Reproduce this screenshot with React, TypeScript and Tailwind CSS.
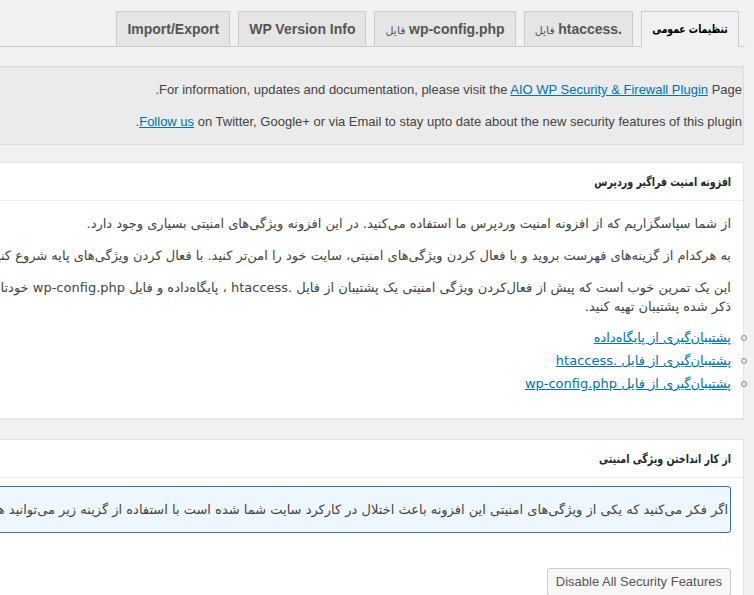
import React from "react";

const tabs = [
  { label: "Import/Export" },
  { label: "WP Version Info" },
  { label: "wp-config.php", fa: "فایل" },
  { label: ".htaccess", fa: "فایل" },
];

const backupLinks = [
  "پشتیبان‌گیری از پایگاه‌داده",
  "پشتیبان‌گیری از فایل .htaccess",
  "پشتیبان‌گیری از فایل wp-config.php",
];

function Tab({ label, fa }: { label: string; fa?: string }) {
  return (
    <div className="h-[36px] mb-[-1px] px-[10px] py-[5px] leading-[24px] border border-[#ccc] bg-[#e5e5e5] text-[14px] font-bold text-[#555] whitespace-nowrap font-['Liberation_Sans',Arial,sans-serif]">
      {label}
      {fa && (
        <span className="text-[11px] font-normal font-['DejaVu_Sans',sans-serif]"> {fa}</span>
      )}
    </div>
  );
}

function Postbox({ title, children }: { title: string; children: React.ReactNode }) {
  return (
    <div className="bg-white border border-[#e5e5e5] shadow-[0_1px_1px_rgba(0,0,0,0.04)]">
      <h3 className="px-[12px] py-[8px] leading-[19px] border-b border-[#eee]">
        <span className="inline-block origin-right scale-x-[0.79] text-[12px] font-bold text-[#23282d] font-['DejaVu_Sans',sans-serif] whitespace-nowrap">
          {title}
        </span>
      </h3>
      <div className="px-[12px]">{children}</div>
    </div>
  );
}

export default function App() {
  return (
    <div className="w-[754px] h-[595px] overflow-hidden bg-[#f1f1f1] flex justify-end">
      <div dir="rtl" className="w-[1100px] shrink-0 mr-[10px]">
        {/* nav tabs */}
        <div className="flex gap-[8px] pt-[11px] pr-[6px] mr-[-1px] border-b border-[#ccc]">
          <div className="w-[98px] h-[36px] mb-[-1px] py-[5px] leading-[24px] border border-[#ccc] border-b-[#f1f1f1] bg-[#f1f1f1] flex justify-center">
            <span className="inline-block scale-x-[0.77] text-[12px] font-bold text-black whitespace-nowrap font-['DejaVu_Sans',sans-serif]">
              تنظیمات عمومی
            </span>
          </div>
          {[...tabs].reverse().map((t) => (
            <Tab key={t.label} label={t.label} fa={t.fa} />
          ))}
        </div>

        {/* plugin info notice */}
        <div className="mt-[19px] border border-[#dcdcdc] bg-[#ebebeb] pr-[1px] text-[13px] leading-[19px] text-[#444] font-['Liberation_Sans',Arial,sans-serif]">
          <p className="my-[13px]">
            For information, updates and documentation, please visit the{" "}
            <a href="#" className="text-[#0073aa] underline">AIO WP Security &amp; Firewall Plugin</a> Page.
          </p>
          <p className="my-[13px]">
            <a href="#" className="text-[#0073aa] underline">Follow us</a> on Twitter, Google+ or via Email to stay upto date about the new security features of this plugin.
          </p>
        </div>

        <div className="mt-[17px]">
          <Postbox title="افزونه امنیت فراگیر وردپرس">
            <div className="text-[13px] leading-[19px] text-[#444] font-['DejaVu_Sans',sans-serif] whitespace-nowrap">
              <p className="my-[13px]">
                از شما سپاسگزاریم که از افزونه امنیت وردپرس ما استفاده می‌کنید. در این افزونه ویژگی‌های امنیتی بسیاری وجود دارد.
              </p>
              <p className="my-[13px]">
                به هرکدام از گزینه‌های فهرست بروید و با فعال کردن ویژگی‌های امنیتی، سایت خود را امن‌تر کنید. با فعال کردن ویژگی‌های پایه شروع کنید.
              </p>
              <p className="my-[13px]">
                این یک تمرین خوب است که پیش از فعال‌کردن ویژگی امنیتی یک پشتیبان از فایل .htaccess ، پایگاه‌داده و فایل wp-config.php خودتان بگیرید. با پیوندهای زیر می‌توانید از فایل‌های
                <br />
                ذکر شده پشتیبان تهیه کنید.
              </p>
              <ul className="mt-[13px] mr-[-16px]">
                {backupLinks.map((l) => (
                  <li key={l} className="flex items-center gap-[10px] leading-[18px] mb-[5px]">
                    <span className="w-[6px] h-[6px] rounded-full border border-[#888] shrink-0" />
                    <a href="#" className="text-[#0073aa] underline">{l}</a>
                  </li>
                ))}
              </ul>
              <div className="h-[20px]" />
            </div>
          </Postbox>
        </div>

        <div className="mt-[20px]">
          <Postbox title="از کار انداختن ویژگی امنیتی">
            <div className="mt-[8px] border border-[#3a6ea5] rounded-[3px] bg-[#eef7fd] pr-[2px] text-[13px] leading-[19px] text-[#444] whitespace-nowrap font-['DejaVu_Sans',sans-serif]">
              <p className="my-[13px]">
                اگر فکر می‌کنید که یکی از ویژگی‌های امنیتی این افزونه باعث اختلال در کارکرد سایت شما شده است با استفاده از گزینه زیر می‌توانید همه ویژگی‌های امنیتی را غیرفعال کنید.
              </p>
            </div>
            <div className="mt-[35px] flex">
              <button className="h-[28px] px-[8px] border border-[#ccc] rounded-[3px] bg-[#f7f7f7] shadow-[0_1px_0_#ccc] text-[13px] text-[#555] font-['Liberation_Sans',Arial,sans-serif]">
                Disable All Security Features
              </button>
            </div>
            <div className="h-[20px]" />
          </Postbox>
        </div>
      </div>
    </div>
  );
}
